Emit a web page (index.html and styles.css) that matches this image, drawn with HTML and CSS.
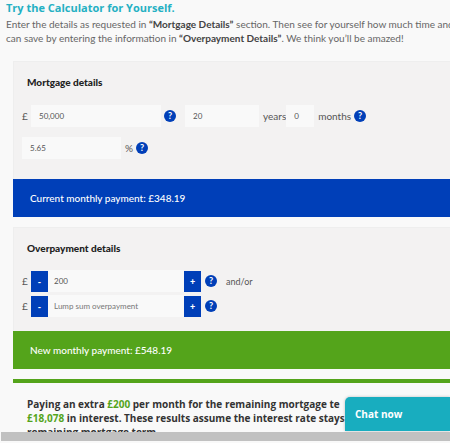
FILE: index.html
```
<!DOCTYPE html>
<html lang="en">
<head>
<meta charset="utf-8">
<title>Mortgage overpayment calculator</title>
<link rel="stylesheet" href="styles.css">
</head>
<body>
<main class="page">
  <header class="intro">
    <h1>Try the Calculator for Yourself.</h1>
    <p>Enter the details as requested in <strong>“Mortgage Details”</strong> section. Then see for yourself how much time and<br>can save by entering the information in <strong>“Overpayment Details”</strong>. We think you’ll be amazed!</p>
  </header>
  <form class="calculator">
    <section class="panel">
      <h2>Mortgage details</h2>
      <div class="row">
        <label class="unit currency" for="balance">£</label>
        <input class="field balance" id="balance" type="text" value="50,000">
        <button class="help" type="button" aria-label="Help with balance">?</button>
        <input class="field years" id="years" type="text" value="20">
        <label class="unit" for="years">years</label>
        <input class="field months" id="months" type="text" value="0">
        <label class="unit months-unit" for="months">months</label>
        <button class="help" type="button" aria-label="Help with term">?</button>
      </div>
      <div class="row rate-row">
        <input class="field rate" id="rate" type="text" value="5.65">
        <label class="unit rate-unit" for="rate">%</label>
        <button class="help" type="button" aria-label="Help with rate">?</button>
      </div>
    </section>
    <div class="payment current">Current monthly payment: £348.19</div>
    <section class="panel overpayment">
      <h2>Overpayment details</h2>
      <div class="row stepper-row">
        <label class="unit currency" for="monthly">£</label>
        <button class="step" type="button" aria-label="Decrease monthly overpayment">-</button>
        <input class="field amount" id="monthly" type="text" value="200">
        <button class="step" type="button" aria-label="Increase monthly overpayment">+</button>
        <button class="help" type="button" aria-label="Help with monthly overpayment">?</button>
        <span class="either">and/or</span>
      </div>
      <div class="row stepper-row">
        <label class="unit currency" for="lump">£</label>
        <button class="step" type="button" aria-label="Decrease lump sum">-</button>
        <input class="field amount" id="lump" type="text" placeholder="Lump sum overpayment">
        <button class="step" type="button" aria-label="Increase lump sum">+</button>
        <button class="help" type="button" aria-label="Help with lump sum">?</button>
      </div>
    </section>
    <div class="payment new">New monthly payment: £548.19</div>
    <p class="result">Paying an extra <em>£200</em> per month for the remaining mortgage te<br><em>£18,078</em> in interest. These results assume the interest rate stays<br>remaining mortgage term.</p>
  </form>
</main>
<div class="scrollbar"></div>
<button class="chat" type="button">Chat now</button>
</body>
</html>
```
FILE: styles.css
```
* { box-sizing: border-box; }

body {
  margin: 0;
  height: 100vh;
  display: flex;
  flex-direction: column;
  overflow: hidden;
  background: #f9f9f9;
  color: #333;
  font-family: Lato, "Liberation Sans", sans-serif;
}

button, input { font-family: inherit; border: 0; margin: 0; }

.page {
  flex: 1;
  min-height: 0;
  overflow: hidden;
}

.intro {
  padding-left: 6px;
  white-space: nowrap;
}

h1 {
  margin: 0 0 2px;
  color: #24b0c3;
  font: 700 11px/15px "Open Sans", sans-serif;
}

.intro p {
  margin: 0;
  color: #666;
  font: 10px/14px Lato, sans-serif;
}

.intro strong { color: #444; }

.calculator { margin: 16px 0 0 13px; }

.panel {
  padding: 14px 0 20px 8px;
  border: 1px solid #eee;
  border-right: 0;
  border-bottom: 0;
  background: #f3f2f2;
}

h2 {
  margin: 0 0 17px 5px;
  color: #222;
  font-size: 10px;
  font-weight: 900;
  line-height: 12px;
}

.row {
  display: flex;
  align-items: center;
  height: 22px;
  white-space: nowrap;
}

.rate-row { margin-top: 10px; }

.unit {
  color: #555;
  font-size: 10px;
  line-height: 12px;
}

.currency { width: 9px; }

.field {
  height: 22px;
  padding: 0 8px;
  background: #f9f9f9;
  color: #555;
  font-size: 8px;
}

.field::placeholder { color: #777; opacity: 1; }

.balance { width: 130px; }
.years { width: 74px; margin: 0 4px 0 9px; }
.months { width: 28px; margin-left: 0; }
.months-unit { margin-left: 4px; }
.rate { width: 99px; }
.rate-unit { margin-left: 4px; }

.help {
  flex: none;
  width: 12px;
  height: 12px;
  margin-left: 3px;
  padding: 0;
  border-radius: 50%;
  background: #003fb8;
  color: #fff;
  font-size: 9px;
  font-weight: 700;
  line-height: 12px;
}

.payment {
  padding: 0 17px;
  color: #fff;
  font-size: 10px;
  font-weight: 500;
  line-height: 38px;
}

.current { background: #003fb8; }
.new { background: #54a41b; }

.overpayment {
  margin-top: 10px;
  padding-bottom: 14px;
}

.overpayment h2 { margin-bottom: 16px; }

.stepper-row + .stepper-row { margin-top: 3px; }
.stepper-row .help { margin-left: 4px; }

.step {
  width: 17px;
  height: 21px;
  padding: 0;
  background: #003fb8;
  color: #fff;
  font-size: 9px;
  font-weight: 900;
}

.amount {
  width: 136px;
  padding: 0 6px;
}

.either {
  margin-left: 9px;
  color: #555;
  font-size: 9px;
}

.result {
  margin: 10px 0 0;
  padding: 14px 0 0 14px;
  border-top: 4px solid #54a41b;
  font: 700 10px/14px "Open Sans", sans-serif;
  white-space: nowrap;
}

.result em {
  color: #54a41b;
  font-style: normal;
}

.scrollbar {
  flex: none;
  height: 9px;
  margin: 0 0 2px 1px;
  background: #c1c1c1;
}

.chat {
  position: absolute;
  right: 0;
  bottom: 12px;
  width: 105px;
  height: 34px;
  padding: 0 10px;
  border-radius: 5px 0 0 0;
  background: #18adbf;
  box-shadow: 0 0 3px #bbb;
  color: #fff;
  font: 700 10px/14px "Open Sans", sans-serif;
  text-align: left;
}
```
